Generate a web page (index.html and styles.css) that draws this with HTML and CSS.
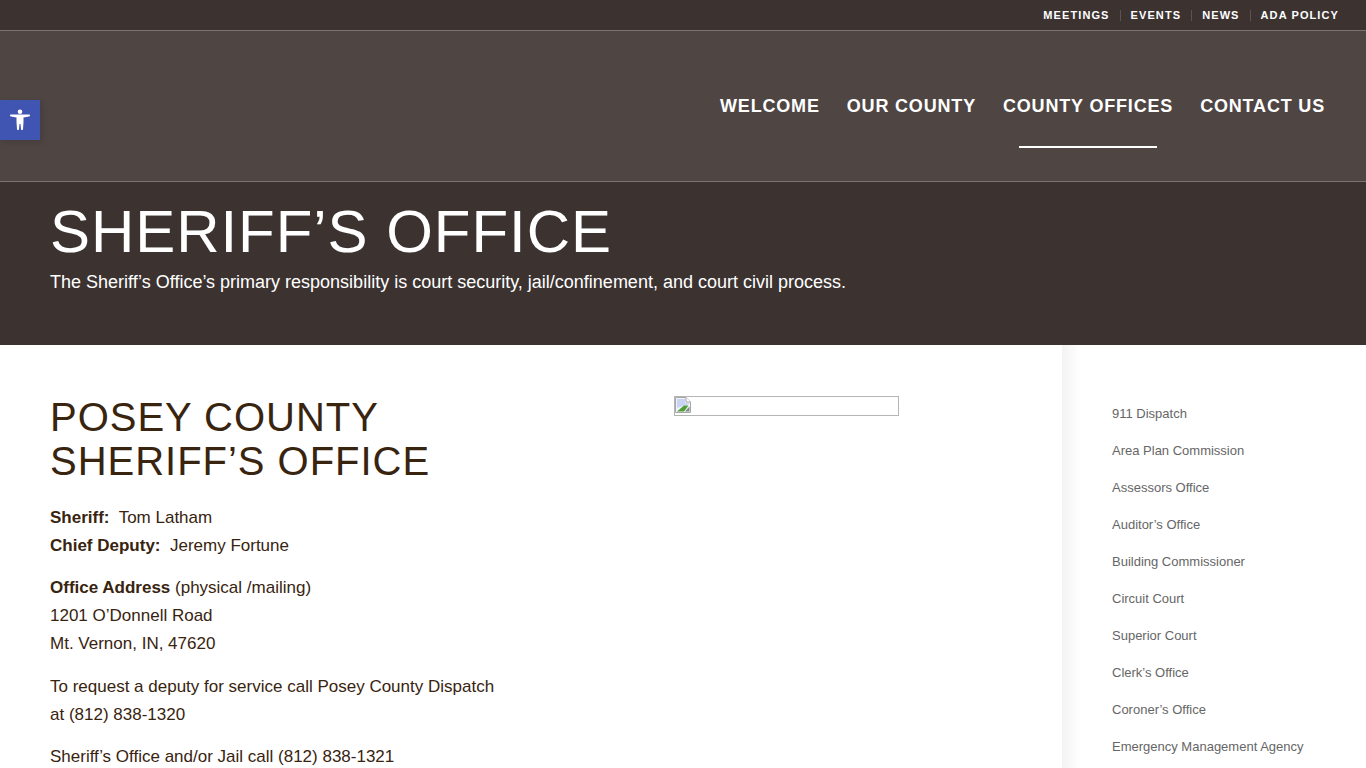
FILE: index.html
```html
<!DOCTYPE html>
<html lang="en">
<head>
  <meta charset="UTF-8" />
  <meta name="viewport" content="width=device-width, initial-scale=1.0"/>
  <title>Sheriff's Office</title>
  <link rel="stylesheet" href="styles.css">
</head>
<body>

  <div class="page">
    <!-- Top links -->
    <div class="top-bar">
      <a href="#">Meetings</a>
      <a href="#">Events</a>
      <a href="#">News</a>
      <a href="#">ADA Policy</a>
    </div>

    <!-- Main nav -->
    <header class="site-header">
      <nav class="main-nav">
        <a href="#">Welcome</a>
        <a href="#">Our County</a>
        <a href="#" class="active">County Offices</a>
        <a href="#">Contact Us</a>
      </nav>
    </header>

    <section class="hero">
      <h1>SHERIFF’S OFFICE</h1>
      <p>The Sheriff’s Office’s primary responsibility is court security, jail/confinement, and court civil process.</p>
    </section>

    <div class="content-wrap">
      <main class="content">
        <div class="office-info">
          <h2>POSEY COUNTY<br>SHERIFF’S OFFICE</h2>
          <p><strong>Sheriff:</strong>&nbsp; Tom Latham<br>
          <strong>Chief Deputy:</strong>&nbsp; Jeremy Fortune</p>
          <p><strong>Office Address</strong> (physical /mailing)<br>
          1201 O’Donnell Road<br>
          Mt. Vernon, IN, 47620</p>
          <p>To request a deputy for service call Posey County Dispatch<br>
          at (812) 838-1320</p>
          <p>Sheriff’s Office and/or Jail call (812) 838-1321</p>
        </div>
        <div class="office-photo">
          <!-- Broken image placeholder -->
          <div class="broken-img">
            <svg width="16" height="16" viewBox="0 0 16 16">
              <path d="M.5 .5H11L15.500 5V15.500H.5Z" fill="#f2f4fb" stroke="#a6a6a6"/>
              <path d="M11 .5V5H15.500" fill="#fff" stroke="#a6a6a6"/>
              <path d="M2 2H10V6H14V7L2 11Z" fill="#c9d3f3"/>
              <path d="M2 14.500L9 8.500H13.500L9 14.500Z" fill="#4f9e3a"/>
              <path d="M10 14.500L14.500 9.500V14.500Z" fill="#7f8b7b"/>
            </svg>
          </div>
        </div>
      </main>

      <aside class="sidebar">
        <a href="#">911 Dispatch</a>
        <a href="#">Area Plan Commission</a>
        <a href="#">Assessors Office</a>
        <a href="#">Auditor’s Office</a>
        <a href="#">Building Commissioner</a>
        <a href="#">Circuit Court</a>
        <a href="#">Superior Court</a>
        <a href="#">Clerk’s Office</a>
        <a href="#">Coroner’s Office</a>
        <a href="#">Emergency Management Agency</a>
      </aside>
    </div>

    <!-- Accessibility toggle -->
    <button class="a11y-toggle" aria-label="Open accessibility tools">
      <svg width="20" height="24" viewBox="0 0 20 24">
        <circle cx="10" cy="3.800" r="2.300" fill="#fff"/>
        <path d="M1 6.500H19C19.600 6.500 20 6.900 20 7.500C20 8.100 19.600 8.400 19 8.500L13.500 9.500V14L13 21C13 21.600 12.600 22 12 22C11.400 22 11 21.600 11 21L10.500 16H9.500L9 21C9 21.600 8.600 22 8 22C7.400 22 7 21.600 7 21L6.500 14V9.500L1 8.500C.4 8.400 0 8.100 0 7.500C0 6.900 .4 6.500 1 6.500Z" fill="#fff"/>
      </svg>
    </button>
  </div>

</body>
</html>
```

FILE: styles.css
```css
body {
  margin: 0;
  font-family: "Liberation Sans", Arial, sans-serif;
  background-color: #fff;
}

a {
  text-decoration: none;
}

.page {
  position: relative;
  height: 768px;
  overflow: hidden;
}

.top-bar {
  display: flex;
  justify-content: flex-end;
  align-items: center;
  height: 30px;
  padding-right: 27px;
  background-color: #3c3331;
}

.top-bar a {
  color: #fff;
  font-size: 11px;
  font-weight: 700;
  letter-spacing: 1.1px;
  text-transform: uppercase;
  line-height: 11px;
  padding: 0 10px;
  border-left: 1px solid #5c5351;
}

.top-bar a:first-child {
  border-left: none;
}

.top-bar a:last-child {
  padding-right: 0;
}

.site-header {
  display: flex;
  justify-content: flex-end;
  height: 150px;
  padding-right: 41px;
  background-color: #4f4644;
  border-top: 1px solid #7b7371;
  border-bottom: 1px solid #7b7371;
}

.main-nav {
  display: flex;
  gap: 27px;
}

.main-nav a {
  position: relative;
  color: #fff;
  font-size: 18px;
  font-weight: 700;
  letter-spacing: 0.82px;
  line-height: 150px;
  height: 148px;
  text-transform: uppercase;
}

.main-nav a.active::after {
  content: "";
  position: absolute;
  left: 16px;
  right: 16px;
  top: 115px;
  height: 2px;
  background-color: #fff;
}

.hero {
  height: 163px;
  padding: 20px 50px 0;
  box-sizing: border-box;
  background-color: #3c3331;
  color: #fff;
}

.hero h1 {
  margin: 0;
  font-size: 60px;
  font-weight: 400;
  line-height: 60px;
  letter-spacing: 0.95px;
}

.hero p {
  margin: 5px 0 0;
  font-size: 18px;
  line-height: 30px;
}

.content-wrap {
  display: flex;
}

.content {
  display: flex;
  width: 1062px;
  box-sizing: border-box;
  padding: 50px 50px 0;
}

.office-info {
  width: 458px;
  flex-shrink: 0;
  color: #38240f;
  font-size: 17px;
  line-height: 28px;
}

.office-info h2 {
  margin: 0 0 21px;
  font-size: 40px;
  font-weight: 400;
  line-height: 44px;
  letter-spacing: 0.98px;
}

.office-info p {
  margin: 0 0 14.4px;
}

.office-photo {
  margin-left: 166px;
  padding-top: 1px;
}

.broken-img {
  width: 225px;
  height: 20px;
  box-sizing: border-box;
  border: 1px solid #b5b5b5;
}

.broken-img svg {
  display: block;
}

.sidebar {
  flex: 1;
  display: flex;
  flex-direction: column;
  gap: 19px;
  padding: 60px 0 0 50px;
  background: linear-gradient(to right, #f3f3f3, #fff 18px);
}

.sidebar a {
  color: #666;
  font-size: 13px;
  line-height: 18px;
}

.a11y-toggle {
  position: absolute;
  left: 0;
  top: 100px;
  width: 40px;
  height: 40px;
  padding: 0;
  border: none;
  display: flex;
  align-items: center;
  justify-content: center;
  background-color: #4054b2;
  box-shadow: 2px 2px 6px rgba(0,0,0,0.15);
  cursor: pointer;
}
```
